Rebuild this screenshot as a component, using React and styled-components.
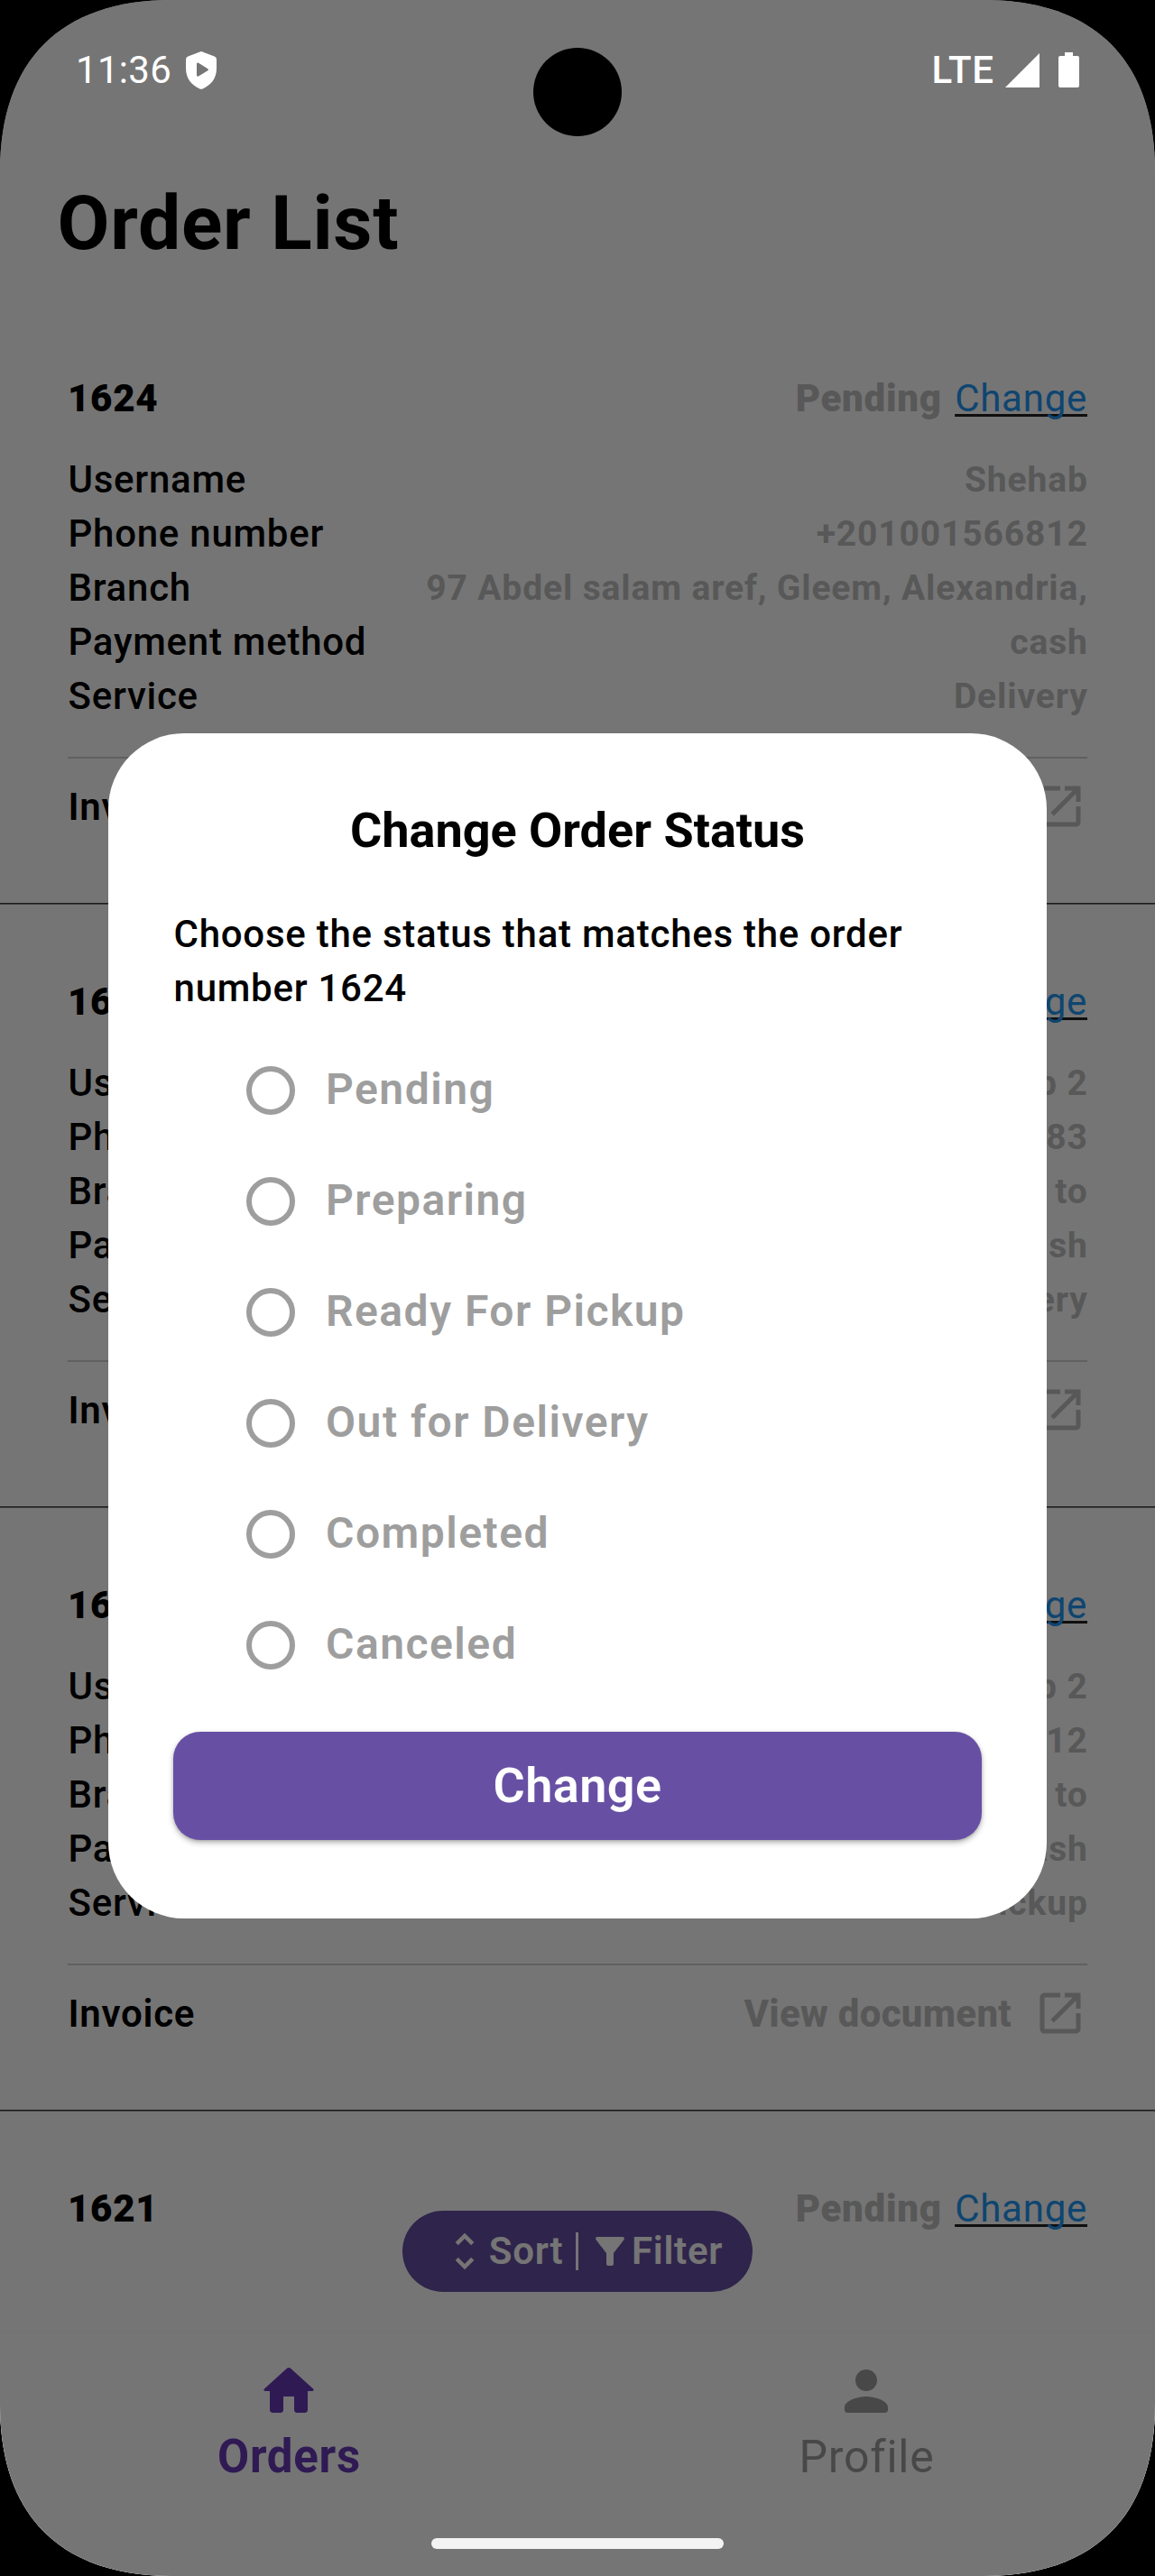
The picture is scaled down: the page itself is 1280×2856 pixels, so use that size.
import React from "react";
import styled, { createGlobalStyle } from "styled-components";

const GlobalStyle = createGlobalStyle`
  *, *::before, *::after { box-sizing: border-box; }
  body { margin: 0; background: #000; }
  #root { width: 1280px; height: 2856px; overflow: hidden; }
`;

const Screen = styled.div`
  position: relative;
  display: flex;
  flex-direction: column;
  width: 1280px;
  height: 2856px;
  overflow: hidden;
  background: #fff;
  color: #000;
  font-family: Roboto, "Liberation Sans", sans-serif;
  font-size: 42px;
  line-height: 60px;
  letter-spacing: 0.75px;
  white-space: nowrap;
  clip-path: path("M0 190C0 67 67 0 190 0H1090C1213 0 1280 67 1280 190V2666C1280 2789 1213 2856 1090 2856H190C67 2856 0 2789 0 2666Z");
`;

const Title = styled.h1`
  margin: 0;
  padding: 193px 0 0 63.5px;
  height: 333px;
  flex: none;
  font-size: 84px;
  line-height: 110px;
  font-weight: 700;
  letter-spacing: 0.75px;
`;

const OrderList = styled.main`
  flex: 1;
  min-height: 0;
  overflow: hidden;
`;

const Card = styled.article`
  display: flex;
  flex-direction: column;
  height: 669px;
  padding: 79px 75px 0;
  border-bottom: 1px solid #404040;
  box-shadow: 0 1px 0 #8a8a8a;
`;

const Row = styled.div`
  display: flex;
  align-items: center;
  justify-content: space-between;
  height: 60px;
  flex: none;
`;

const CardHeader = styled(Row)`
  margin-bottom: 30px;
`;

const OrderNumber = styled.h2`
  margin: 0;
  font-size: 42px;
  font-weight: 900;
`;

const StatusGroup = styled.div`
  display: flex;
  gap: 14.5px;
`;

const Status = styled.span`
  color: #bfbfbf;
  font-weight: 900;
`;

const ChangeLink = styled.a`
  color: #2196f3;
  text-decoration: underline #222 2.5px;
  text-underline-offset: 3px;
  text-decoration-skip-ink: none;
`;

const Label = styled.span`
  padding-left: 0.5px;
  font-weight: ${(p) => (p.$strong ? 600 : 500)};
`;

const Value = styled.span`
  margin-right: -0.75px;
  color: #bfbfbf;
  font-size: 39px;
  font-weight: 700;
  letter-spacing: 0.87px;
`;

const Rule = styled.hr`
  width: 100%;
  height: 2px;
  margin: 37px 0 24px;
  border: 0;
  background: #d1d1d1;
  flex: none;
`;

const Icon = styled.svg`
  display: block;
  flex: none;
  width: ${(p) => p.$size}px;
  height: ${(p) => p.$size}px;
  fill: currentColor;
`;

const DocumentButton = styled.div`
  display: flex;
  align-items: center;
  gap: 24px;
  color: #bfbfbf;
  font-weight: 800;
  letter-spacing: 0.3px;

  ${Icon} {
    margin-top: -2px;
  }
`;

const BottomNav = styled.nav`
  display: grid;
  grid-template-columns: 1fr 1fr;
  flex: none;
  height: 269px;
  padding-top: 28px;
  background: #fff;
  box-shadow: 0 -2px 4px rgba(0, 0, 0, 0.025);
`;

const NavItem = styled.div`
  display: flex;
  flex-direction: column;
  align-items: center;
  gap: 7px;
  color: ${(p) => (p.$active ? "#673ab7" : "#9e9e9e")};
  font-size: ${(p) => (p.$active ? 51 : 50)}px;
  font-weight: ${(p) => (p.$active ? 700 : 400)};
  letter-spacing: 0.75px;
`;

const NavLabel = styled.span`
  padding-left: 1px;
`;

const SortFilter = styled.div`
  position: absolute;
  left: 446.3px;
  top: 2451px;
  display: flex;
  align-items: center;
  width: 387.4px;
  height: 90px;
  padding-left: 41.5px;
  border-radius: 45px;
  background: #6750a4;
  color: #fff;
  font-weight: 600;
`;

const PillDivider = styled.span`
  width: 3px;
  height: 42px;
  margin: 0 11px 0 13.5px;
  background: #fff;
`;

const Scrim = styled.div`
  position: absolute;
  inset: 0;
  display: flex;
  justify-content: center;
  align-items: flex-start;
  padding-top: 813px;
  background: rgba(0, 0, 0, 0.54);
`;

const Dialog = styled.section`
  display: flex;
  flex-direction: column;
  width: 1040px;
  height: 1314px;
  padding: 72px 72px 0;
  border-radius: 84px;
  background: #fff;
`;

const DialogTitle = styled.h2`
  margin: 0 0 49px;
  font-size: 54px;
  line-height: 72px;
  font-weight: 700;
  letter-spacing: 0;
  text-align: center;
`;

const DialogText = styled.p`
  margin: 0;
  padding-left: 0.5px;
  font-weight: 500;
`;

const Options = styled.div`
  display: flex;
  flex-direction: column;
  margin-top: 21px;
  padding-left: 81px;
`;

const Option = styled.label`
  display: flex;
  align-items: center;
  gap: 34px;
  height: 123px;
  color: #9e9e9e;
  font-size: 48px;
  font-weight: 600;
  letter-spacing: 1.5px;
`;

const Radio = styled.span`
  width: 54px;
  height: 54px;
  border: 6px solid #9e9e9e;
  border-radius: 50%;
`;

const OptionText = styled.span`
  margin-top: -1px;
`;

const Submit = styled.button`
  height: 120px;
  margin-top: 35px;
  padding: 0 0 2px;
  border: 0;
  border-radius: 30px;
  background: #6750a4;
  color: #fff;
  font: 600 54px Roboto, "Liberation Sans", sans-serif;
  letter-spacing: 0.45px;
  box-shadow: 0 3px 6px rgba(0, 0, 0, 0.28), 0 1px 3px rgba(0, 0, 0, 0.14);
`;

const StatusBar = styled.header`
  position: absolute;
  inset: 0 0 auto;
  display: flex;
  justify-content: space-between;
  height: 156px;
  padding: 48px 84px 0;
  color: #fff;
  letter-spacing: 0;
`;

const StatusSide = styled.div`
  display: flex;
`;

const Clock = styled.span`
  letter-spacing: 0.3px;
`;

const Network = styled.span`
  margin: 0 12px 0 0;
  font-weight: 500;
  letter-spacing: 0.9px;
`;

const Glyph = styled.svg`
  display: block;
  width: ${(p) => p.$w}px;
  height: ${(p) => p.$h}px;
  margin: ${(p) => p.$m};
  fill: currentColor;
`;

const Camera = styled.div`
  position: absolute;
  left: 591px;
  top: 53px;
  width: 98px;
  height: 98px;
  border-radius: 50%;
  background: #000;
`;

const HomeHandle = styled.div`
  position: absolute;
  left: 478px;
  bottom: 30px;
  width: 324px;
  height: 12px;
  border-radius: 6px;
  background: #f3f3f3;
`;

const icons = {
  open: "M19 19H5V5h7V3H5c-1.11 0-2 .9-2 2v14c0 1.1.89 2 2 2h14c1.1 0 2-.9 2-2v-7h-2v7zM14 3v2h3.59l-9.83 9.83 1.41 1.41L19 6.41V10h2V3h-7z",
  unfold: "M12 5.83L15.17 9l1.41-1.41L12 3 7.41 7.59 8.83 9 12 5.83zm0 12.34L8.83 15l-1.41 1.41L12 21l4.59-4.59L15.17 15 12 18.17z",
  filter: "M4.25 5.61C6.27 8.2 10 13 10 13v6c0 .55.45 1 1 1h2c.55 0 1-.45 1-1v-6s3.72-4.8 5.74-7.39c.51-.66.04-1.61-.79-1.61H5.04c-.83 0-1.3.95-.79 1.61z",
  home: "M10 19v-5h4v5c0 .55.45 1 1 1h3c.55 0 1-.45 1-1v-7h1.7c.46 0 .68-.57.33-.87L12.67 3.6c-.38-.34-.96-.34-1.34 0l-8.36 7.53c-.34.3-.13.87.33.87H5v7c0 .55.45 1 1 1h3c.55 0 1-.45 1-1z",
  person: "M12 12c2.21 0 4-1.79 4-4s-1.79-4-4-4-4 1.79-4 4 1.79 4 4 4zm0 2c-2.67 0-8 1.34-8 4v1c0 .55.45 1 1 1h14c.55 0 1-.45 1-1v-1c0-2.66-5.33-4-8-4z",
};

const MaterialIcon = ({ name, size }) => (
  <Icon $size={size} viewBox="0 0 24 24" aria-hidden="true">
    <path d={icons[name]} />
  </Icon>
);

const orders = [
  { id: "1624", values: ["Shehab", "+201001566812", "97 Abdel salam aref, Gleem, Alexandria,", "cash", "Delivery"] },
  { id: "1623", values: ["Shehab 2", "+201001566883", "Alexandria to", "cash", "Delivery"] },
  { id: "1622", values: ["Shehab 2", "+201001566812", "Alexandria to", "cash", "Pickup"] },
  { id: "1621", values: [] },
];

const fields = ["Username", "Phone number", "Branch", "Payment method", "Service"];
const statuses = ["Pending", "Preparing", "Ready For Pickup", "Out for Delivery", "Completed", "Canceled"];

function OrderCard({ id, values }) {
  return (
    <Card>
      <CardHeader>
        <OrderNumber>{id}</OrderNumber>
        <StatusGroup>
          <Status>Pending</Status>
          <ChangeLink>Change</ChangeLink>
        </StatusGroup>
      </CardHeader>
      {values.map((value, i) => (
        <Row key={fields[i]}>
          <Label>{fields[i]}</Label>
          <Value>{value}</Value>
        </Row>
      ))}
      {values.length > 0 && (
        <>
          <Rule />
          <Row>
            <Label $strong>Invoice</Label>
            <DocumentButton>
              View document
              <MaterialIcon name="open" size={60} />
            </DocumentButton>
          </Row>
        </>
      )}
    </Card>
  );
}

export default function App() {
  return (
    <>
      <GlobalStyle />
      <Screen>
        <Title>Order List</Title>
        <OrderList>
          {orders.map((order) => (
            <OrderCard key={order.id} {...order} />
          ))}
        </OrderList>
        <BottomNav>
          <NavItem $active>
            <MaterialIcon name="home" size={72} />
            <NavLabel>Orders</NavLabel>
          </NavItem>
          <NavItem>
            <MaterialIcon name="person" size={72} />
            <NavLabel>Profile</NavLabel>
          </NavItem>
        </BottomNav>
        <SortFilter>
          <MaterialIcon name="unfold" size={54} />
          Sort
          <PillDivider />
          <MaterialIcon name="filter" size={48} />
          Filter
        </SortFilter>
        <Scrim>
          <Dialog>
            <DialogTitle>Change Order Status</DialogTitle>
            <DialogText>
              Choose the status that matches the order
              <br />
              number 1624
            </DialogText>
            <Options>
              {statuses.map((status) => (
                <Option key={status}>
                  <Radio />
                  <OptionText>{status}</OptionText>
                </Option>
              ))}
            </Options>
            <Submit>Change</Submit>
          </Dialog>
        </Scrim>
        <StatusBar>
          <StatusSide>
            <Clock>11:36</Clock>
            <Glyph $w={34} $h={42} $m="9px 0 0 16px" viewBox="0 0 34 42">
              <path
                fillRule="evenodd"
                d="M15.6.4Q17 -.3 18.4.4L31.6 5.6Q34 6.6 34 9V19C34 30 27.5 37.5 18.6 41.5Q17 42.2 15.4 41.5C6.5 37.5 0 30 0 19V9Q0 6.600 2.400 5.600ZM12 14V26Q12 28.600 14 27.400L24.300 21.200Q25.500 20.200 24.300 19.200L14 12.800Q12 11.600 12 14Z"
              />
            </Glyph>
          </StatusSide>
          <StatusSide>
            <Network>LTE</Network>
            <Glyph $w={38} $h={38} $m="11px 21px 0 0" viewBox="0 0 38 38">
              <path d="M38 0V38H0Z" />
            </Glyph>
            <Glyph $w={23} $h={39} $m="10px 0 0 0" viewBox="0 0 23 39">
              <path d="M7 0H16V4H21Q23 4 23 6V37Q23 39 21 39H2Q0 39 0 37V6Q0 4 2 4H7Z" />
            </Glyph>
          </StatusSide>
        </StatusBar>
        <Camera />
        <HomeHandle />
      </Screen>
    </>
  );
}
